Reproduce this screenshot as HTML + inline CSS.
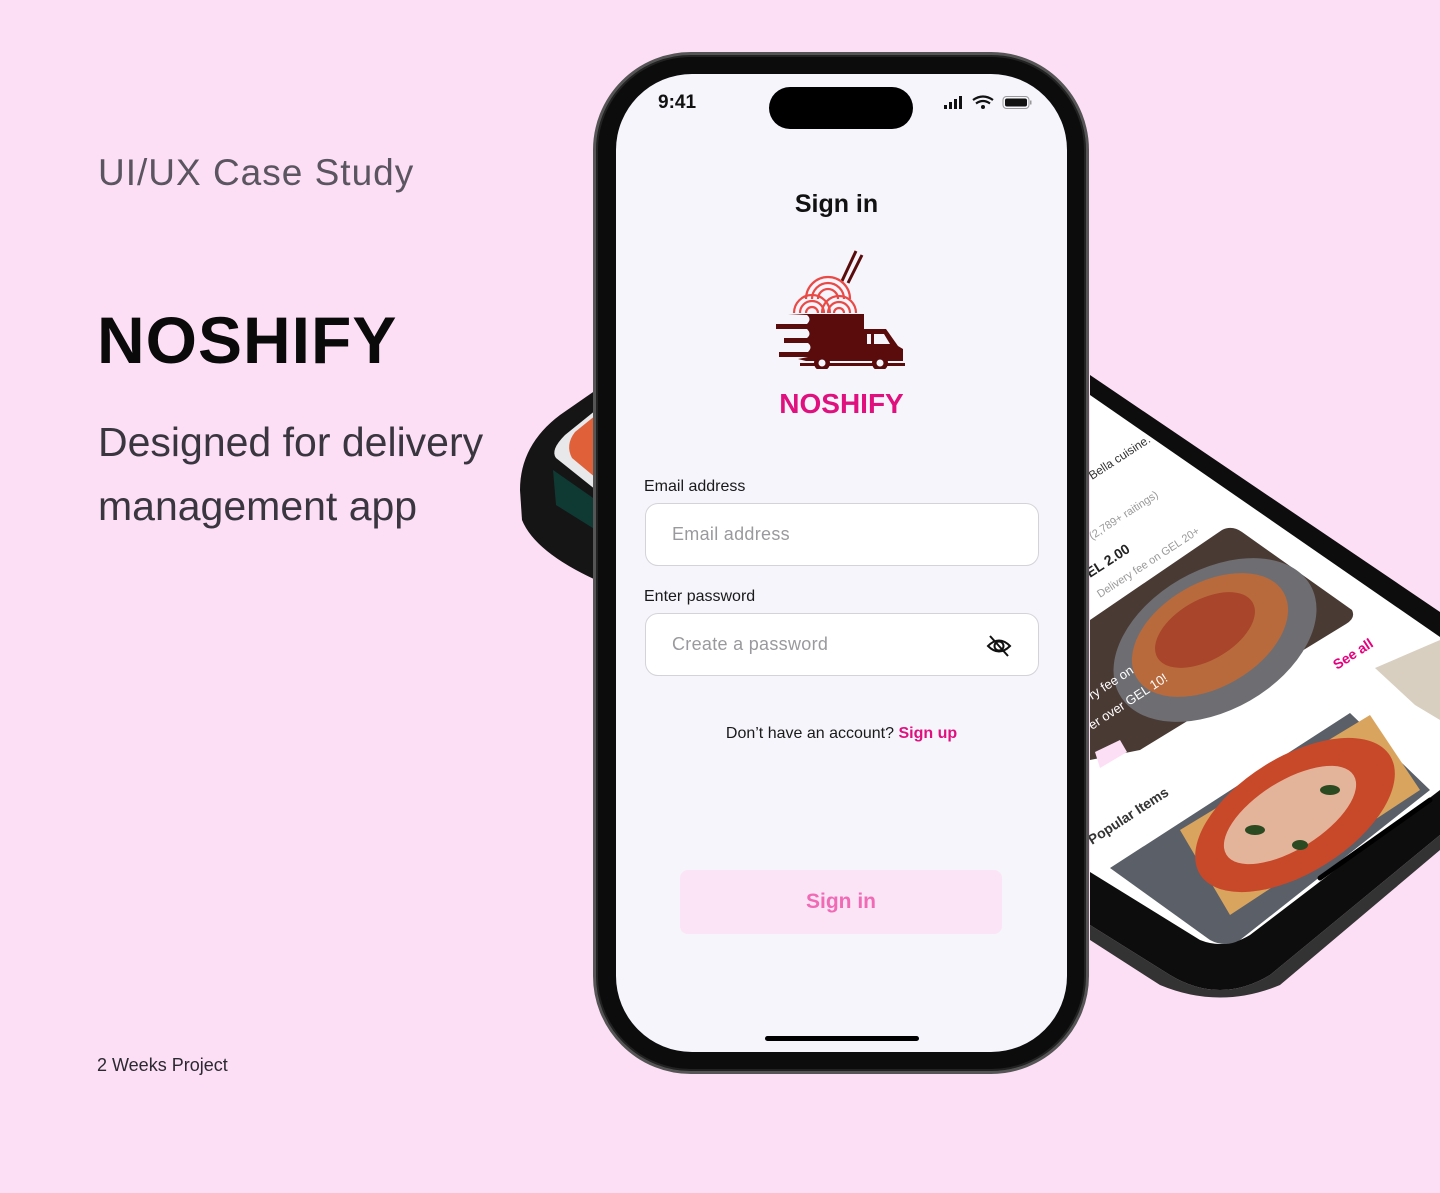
<!DOCTYPE html>
<html><head><meta charset="utf-8">
<style>
*{margin:0;padding:0;box-sizing:border-box}
body{width:1440px;height:1193px;background:#fcdff5;position:relative;overflow:hidden;font-family:"Liberation Sans",sans-serif}
.abs{position:absolute}
.t1{left:98px;top:152px;font-size:37px;color:#5a5560;letter-spacing:1px}
.t2{left:97px;top:302px;font-size:66px;font-weight:bold;color:#0a0a0a;letter-spacing:1px}
.t3{left:98px;top:410px;font-size:41px;line-height:64px;color:#3a3640}
.t4{left:97px;top:1055px;font-size:18px;color:#2a2830}
.phone{left:593px;top:52px;width:496px;height:1022px;border-radius:98px;background:#0c0c0c;border:3px solid #555;box-shadow:inset 0 0 0 2px #222}
.screen{left:616px;top:74px;width:451px;height:978px;border-radius:76px;background:#f6f5fb;overflow:hidden}
.lbl{font-size:16px;color:#1a1a1a;position:absolute;left:28px}
.inp{position:absolute;left:29px;width:394px;height:63px;background:#fff;border:1.5px solid #d4d4d8;border-radius:13px;font-size:18px;color:#9a9a9e;padding:20px 0 0 26px;letter-spacing:.3px}
</style></head><body>
<div class="abs t1">UI/UX Case Study</div>
<div class="abs t2">NOSHIFY</div>
<div class="abs t3">Designed for delivery<br>management app</div>
<div class="abs t4">2 Weeks Project</div>

<svg class="abs" style="left:0;top:0" width="1440" height="1193">
 <path d="M596,390 L560,415 Q520,445 520,490 L522,520 Q535,552 596,580 Z" fill="#151515"/>
 <path d="M596,410 L565,435 Q550,450 556,458 L596,490 Z" fill="#e8e8ea"/>
 <path d="M596,415 L575,432 Q565,445 572,458 L596,478 Z" fill="#e0603a"/>
 <path d="M553,470 L596,500 L596,530 L556,505 Z" fill="#0f3a34"/>
 <path d="M1090,375 L1440,612 L1440,835 L1270,975 Q1220,1005 1170,975 L1090,925 Z" fill="#0d0d0d"/>
 <path d="M1090,925 L1170,975 Q1220,1005 1270,975 L1440,835 L1440,850 L1280,985 Q1220,1010 1160,985 L1090,940 Z" fill="#333"/>
 <path d="M1090,395 L1440,637 L1440,790 L1250,935 Q1225,950 1200,940 L1090,872 Z" fill="#ffffff"/>
 <path d="M1090,620 L1222,530 Q1232,525 1242,532 L1352,610 Q1356,618 1346,624 L1140,750 L1090,760 Z" fill="#4a3a34"/>
 <ellipse cx="1215" cy="640" rx="110" ry="70" transform="rotate(-30 1215 640)" fill="#6e6e72"/>
 <ellipse cx="1210" cy="635" rx="85" ry="52" transform="rotate(-30 1210 635)" fill="#b86a3c"/>
 <ellipse cx="1205" cy="630" rx="55" ry="30" transform="rotate(-30 1205 630)" fill="#a8452a"/>
 <path d="M1110,868 L1350,713 L1430,790 L1240,940 Q1225,948 1210,940 Z" fill="#5a5f68"/>
 <path d="M1180,830 L1370,715 L1420,790 L1230,915 Z" fill="#d9a45e"/>
 <ellipse cx="1295" cy="815" rx="112" ry="58" transform="rotate(-32 1295 815)" fill="#c8482a"/>
 <ellipse cx="1290" cy="815" rx="75" ry="34" transform="rotate(-32 1290 815)" fill="#eed8c0" opacity=".75"/>
 <ellipse cx="1255" cy="830" rx="10" ry="5" fill="#2c4a22"/><ellipse cx="1330" cy="790" rx="10" ry="5" fill="#2c4a22"/><ellipse cx="1300" cy="845" rx="8" ry="5" fill="#2c4a22"/>
 <path d="M1375,668 L1440,640 L1440,720 L1415,705 Z" fill="#d8cfc0"/>
 <path d="M1320,878 L1430,800" stroke="#000" stroke-width="5" stroke-linecap="round"/>
 <path d="M1095,752 L1120,740 L1127,752 L1100,768 Z" fill="#fcdff5"/>
 <text transform="translate(1337,670) rotate(-33)" font-size="14" font-weight="bold" fill="#e6007e" font-family="Liberation Sans">See all</text>
 <text transform="translate(1092,845) rotate(-33)" font-size="14" font-weight="bold" fill="#333" font-family="Liberation Sans">Popular Items</text>
 <text transform="translate(1090,578) rotate(-33)" font-size="14" font-weight="bold" fill="#222" font-family="Liberation Sans">EL 2.00</text>
 <text transform="translate(1100,598) rotate(-33)" font-size="11" fill="#999" font-family="Liberation Sans">Delivery fee on GEL 20+</text>
 <text transform="translate(1092,540) rotate(-33)" font-size="11" fill="#999" font-family="Liberation Sans">(2,789+ raitings)</text>
 <text transform="translate(1092,480) rotate(-33)" font-size="12" fill="#333" font-family="Liberation Sans">Bella cuisine.</text>
 <text transform="translate(1092,700) rotate(-33)" font-size="13" fill="#fff" font-family="Liberation Sans">ry fee on</text>
 <text transform="translate(1092,730) rotate(-33)" font-size="13" fill="#fff" font-family="Liberation Sans">er over GEL 10!</text>
</svg>

<div class="abs phone"></div>
<div class="abs screen">
 <div class="abs" style="left:42px;top:18px;font-size:19px;font-weight:bold;color:#111">9:41</div>
 <div class="abs" style="left:153px;top:13px;width:144px;height:42px;border-radius:21px;background:#000"></div>
 <svg class="abs" style="left:326px;top:20px" width="95" height="20">
  <rect x="2" y="11" width="3" height="4" fill="#111"/><rect x="7" y="8" width="3" height="7" fill="#111"/><rect x="12" y="5" width="3" height="10" fill="#111"/><rect x="17" y="2" width="3" height="13" fill="#111"/>
  <path d="M31,6 Q41,-1 51,6" stroke="#111" stroke-width="2.2" fill="none"/><path d="M34,9.5 Q41,4.5 48,9.5" stroke="#111" stroke-width="2.2" fill="none"/><circle cx="41" cy="13" r="2" fill="#111"/>
  <rect x="61" y="2.5" width="26" height="12" rx="3.5" fill="none" stroke="#999" stroke-width="1"/><rect x="63" y="4.5" width="22" height="8" rx="2" fill="#111"/><rect x="88" y="6.5" width="1.5" height="4" fill="#999"/>
 </svg>
 <div class="abs" style="left:0;width:441px;text-align:center;top:116px;font-size:25px;font-weight:bold;color:#111">Sign in</div>
 <svg class="abs" style="left:160px;top:175px" width="135" height="120" viewBox="0 0 135 120">
  <line x1="66" y1="32" x2="80" y2="2" stroke="#5a0c0c" stroke-width="3"/><line x1="72" y1="34" x2="86" y2="6" stroke="#5a0c0c" stroke-width="3"/>
  <g fill="none" stroke="#ea4a45" stroke-width="2.2">
   <path d="M30,50 A22,22 0 0 1 74,50"/><path d="M36,50 A16,16 0 0 1 68,50"/><path d="M42,50 A10,10 0 0 1 62,50"/>
   <path d="M18,64 A18,18 0 0 1 54,64"/><path d="M24,64 A12,12 0 0 1 48,64"/><path d="M30,64 A6,6 0 0 1 42,64"/>
   <path d="M46,64 A17,17 0 0 1 80,64"/><path d="M52,64 A11,11 0 0 1 74,64"/><path d="M58,64 A5,5 0 0 1 68,64"/>
  </g>
  <path d="M12,65 L88,65 L88,80 L110,80 L122,97 L127,100 L127,112 L88,112 L30,112 L22,110 L32,108 L3,108 L3,103 L32,103 Q37,98 32,94 L8,94 L8,89 L31,89 Q36,85 31,80 L0,80 L0,75 L31,75 Q36,70 31,66 Z" fill="#5a0c0c"/>
  <path d="M91,85 L95,85 L95,95 L91,95 Z M98,85 L108,85 L114,95 L98,95 Z" fill="#f6f5fb"/>
  <rect x="24" y="114" width="105" height="3" fill="#5a0c0c"/>
  <circle cx="46" cy="114" r="8" fill="#5a0c0c"/><circle cx="46" cy="114" r="3.5" fill="#f6f5fb"/>
  <circle cx="104" cy="114" r="8" fill="#5a0c0c"/><circle cx="104" cy="114" r="3.5" fill="#f6f5fb"/>
 </svg>
 <div class="abs" style="left:0;width:451px;text-align:center;top:314px;font-size:28px;font-weight:bold;color:#e0107e">NOSHIFY</div>
 <div class="lbl" style="top:404px">Email address</div>
 <div class="inp" style="top:429px">Email address</div>
 <div class="lbl" style="top:514px">Enter password</div>
 <div class="inp" style="top:539px">Create a password</div>
 <svg class="abs" style="left:370px;top:560px" width="26" height="24" viewBox="0 0 26 24">
  <path d="M2,12 Q13,1 24,12 Q13,23 2,12 Z" fill="none" stroke="#111" stroke-width="2"/><circle cx="13" cy="12" r="4.5" fill="none" stroke="#111" stroke-width="2"/><line x1="4" y1="2" x2="22" y2="22" stroke="#111" stroke-width="2"/>
 </svg>
 <div class="abs" style="left:0;width:451px;text-align:center;top:651px;font-size:16px;color:#1a1a1a">Don’t have an account? <b style="color:#e0107e">Sign up</b></div>
 <div class="abs" style="left:64px;top:796px;width:322px;height:64px;border-radius:8px;background:#fbe4f6;text-align:center;line-height:64px;font-size:21px;font-weight:bold;color:#f06ab5">Sign in</div>
 <div class="abs" style="left:149px;top:962px;width:154px;height:5px;border-radius:3px;background:#000"></div>
</div>
</body></html>
